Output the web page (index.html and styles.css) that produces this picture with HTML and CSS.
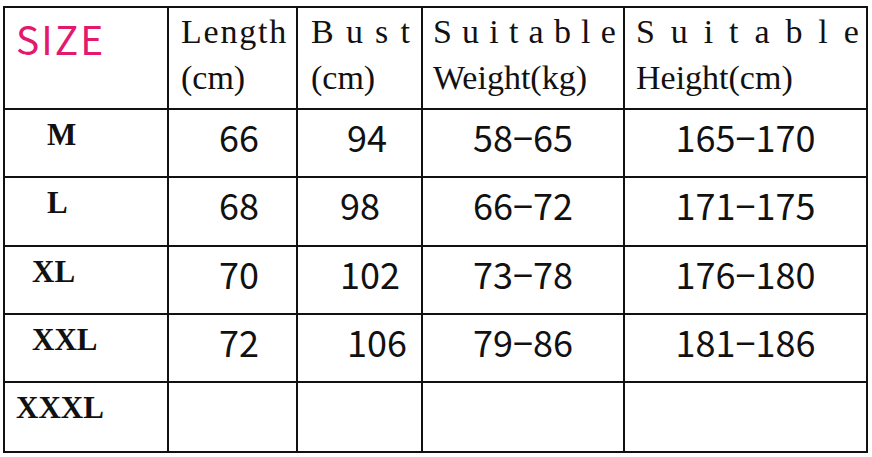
FILE: index.html
```html
<!DOCTYPE html>
<html>
<head>
<meta charset="utf-8">
<title>Size chart</title>
<link rel="stylesheet" href="styles.css">
</head>
<body class="in_body">
  <div class="chart">
    <div class="c size">SIZE</div>
    <div class="c hd pl_12"><span class="ls_len">Lengt</span>h<br>(cm)</div>
    <div class="c hd pl_13"><span class="ls_bust">Bus</span>t<br>(cm)</div>
    <div class="c hd pl_10"><span class="ls_w">Suitabl</span>e<br>Weight(kg)</div>
    <div class="c hd pl_11"><span class="ls_h">Suitabl</span>e<br>Height(cm)</div>

    <div class="c lbl in_1">M</div>
    <div class="c num pl_50">66</div>
    <div class="c num pl_49">94</div>
    <div class="c num mid">58−65</div>
    <div class="c num mid">165−170</div>

    <div class="c lbl in_1">L</div>
    <div class="c num pl_50">68</div>
    <div class="c num pl_42">98</div>
    <div class="c num mid">66−72</div>
    <div class="c num mid">171−175</div>

    <div class="c lbl in_2">XL</div>
    <div class="c num pl_50">70</div>
    <div class="c num pl_42">102</div>
    <div class="c num mid">73−78</div>
    <div class="c num mid">176−180</div>

    <div class="c lbl in_2">XXL</div>
    <div class="c num pl_50">72</div>
    <div class="c num pl_49">106</div>
    <div class="c num mid">79−86</div>
    <div class="c num mid">181−186</div>

    <div class="c lbl in_3">XXXL</div>
    <div class="c"></div>
    <div class="c"></div>
    <div class="c"></div>
    <div class="c"></div>
  </div>
</body>
</html>
```
FILE: styles.css
```css
.in_body
{
  margin:0;
  background-color:#fff;
  color:#111;
}
.chart
{
  display:grid;
  grid-template-columns:164px 129px 125px 202px 243px;
  grid-template-rows:102px 68px 69px 68px 68px 70px;
  width:865px;
  margin:6px 0 0 3px;
  border-left:2px solid #111;
  border-top:2px solid #111;
  box-sizing:border-box;
}
.c
{
  border-right:2px solid #111;
  border-bottom:2px solid #111;
  box-sizing:border-box;
  white-space:nowrap;
}
/* header row */
.size
{
  font-family:"Noto Sans CJK SC", sans-serif;
  font-size:39px;
  line-height:40px;
  letter-spacing:2px;
  color:#e2196c;
  padding:10px 0 0 11px;
}
.hd
{
  font-family:"Liberation Serif", serif;
  font-size:34px;
  line-height:46px;
  padding-top:1px;
}
.ls_len
{
  letter-spacing:1.8px;
}
.ls_bust
{
  letter-spacing:12.2px;
}
.ls_w
{
  letter-spacing:10.2px;
}
.ls_h
{
  letter-spacing:15.9px;
}
.pl_10
{
  padding-left:10px;
}
.pl_11
{
  padding-left:11px;
}
.pl_12
{
  padding-left:12px;
}
.pl_13
{
  padding-left:13px;
}
/* size labels */
.lbl
{
  font-family:"Liberation Serif", serif;
  font-weight:bold;
  font-size:31px;
  line-height:40px;
  padding-top:5px;
}
.in_1
{
  padding-left:42px;
}
.in_2
{
  padding-left:27px;
}
.in_3
{
  padding-left:11px;
}
/* numbers */
.num
{
  font-family:"Noto Sans CJK SC", sans-serif;
  font-size:36px;
  line-height:40px;
  padding-top:6px;
}
.pl_42
{
  padding-left:42px;
}
.pl_49
{
  padding-left:49px;
}
.pl_50
{
  padding-left:50px;
}
.mid
{
  text-align:center;
}
```
